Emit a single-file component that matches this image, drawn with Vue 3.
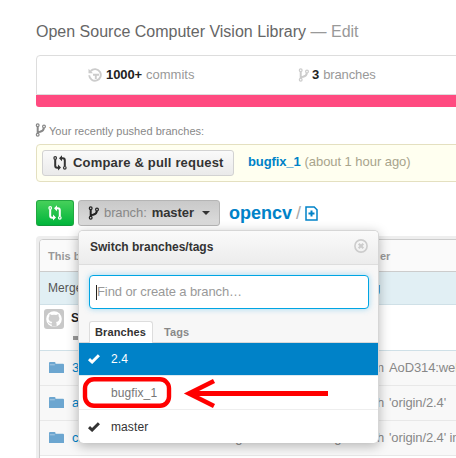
<script setup>
const files = [
  { name: '3rdparty', lead: 'Merge pull request #663 from', rest: 'AoD314:webp' },
  { name: 'android', lead: 'Merge remote-tracking branch', rest: "'origin/2.4'" },
  { name: 'cmake', lead: 'Merge remote-tracking branch', rest: "'origin/2.4' into" },
]
const branches = [
  { name: '2.4', checked: true, active: true },
  { name: 'bugfix_1', muted: true },
  { name: 'master', checked: true },
]
</script>

<template>
  <svg class="defs" width="0" height="0" aria-hidden="true">
    <symbol id="fork" viewBox="0 0 12 14">
      <g fill="none" stroke="currentColor">
        <circle cx="2.7" cy="2.2" r="1.4" stroke-width="1.2" />
        <circle cx="2.7" cy="11.8" r="1.4" stroke-width="1.2" />
        <circle cx="9" cy="3.6" r="1.4" stroke-width="1.2" />
        <path d="M2.7 3.6v6.8M8.8 5c0 3-2.2 3.3-4.2 3.9-1 .3-1.7.8-1.9 1.5" stroke-width="2" />
      </g>
    </symbol>
    <symbol id="compare" viewBox="0 0 14 16">
      <g fill="none" stroke="currentColor">
        <circle cx="2.2" cy="3" r="1.3" stroke-width="1.2" />
        <circle cx="11.8" cy="12.8" r="1.3" stroke-width="1.2" />
        <path d="M2.2 4.5v6.2q0 2 2 2h1.2M11.8 11.3V5.2q0-2-2-2H8.6" stroke-width="2" />
      </g>
      <path d="M5 9.6v6l3-3zM9 .2v6L6 3.2z" fill="currentColor" />
    </symbol>
    <symbol id="check" viewBox="0 0 12 10">
      <path d="M1 5.2 4.1 8 10.9 1.2" fill="none" stroke="currentColor" stroke-width="3" />
    </symbol>
  </svg>

  <main class="page">
    <h1 class="title">Open Source Computer Vision Library <span>— Edit</span></h1>

    <section class="stats">
      <div class="stat commits">
        <svg class="i-history" viewBox="0 0 14 14">
          <path d="M2.7 3A5.8 5.8 0 1 1 1.2 7.2M7.8 11V6.8H5M7.8 6.8H11" fill="none" stroke="currentColor" stroke-width="1.9" />
          <path d="M.5.8v4.4H5z" fill="currentColor" />
        </svg>
        <b>1000+</b><span>commits</span>
      </div>
      <div class="stat branch-count">
        <svg class="i-fork"><use href="#fork" /></svg>
        <b>3</b><span>branches</span>
      </div>
    </section>
    <div class="language"></div>

    <div class="recent"><svg class="i-fork"><use href="#fork" /></svg><span>Your recently pushed branches:</span></div>
    <section class="pushed">
      <button class="compare-btn"><svg class="i-compare"><use href="#compare" /></svg><span>Compare &amp; pull request</span></button>
      <a>bugfix_1</a><span class="when">(about 1 hour ago)</span>
    </section>

    <nav class="toolbar">
      <button class="green"><svg class="i-compare"><use href="#compare" /></svg></button>
      <div class="picker">
        <button class="branch-btn">
          <svg class="i-fork"><use href="#fork" /></svg>
          <span class="label">branch:</span><b>master</b><i class="caret"></i>
        </button>
        <div class="menu">
          <header class="menu-head">
            <b>Switch branches/tags</b>
            <svg class="close" viewBox="0 0 14 14">
              <circle cx="7" cy="7" r="6.1" fill="none" stroke="currentColor" stroke-width="1.6" />
              <path d="m4.7 4.7 4.6 4.6m0-4.6L4.7 9.3" stroke="currentColor" stroke-width="2.1" />
            </svg>
          </header>
          <div class="filters">
            <div class="field"><i class="cursor"></i><span>Find or create a branch…</span></div>
            <div class="tabs"><b class="tab on">Branches</b><b class="tab">Tags</b></div>
          </div>
          <div v-for="b in branches" :key="b.name" class="option" :class="{ active: b.active, muted: b.muted }">
            <span class="tick"><svg v-if="b.checked"><use href="#check" /></svg></span>
            <span class="option-name">{{ b.name }}</span>
          </div>
          <svg class="marks" viewBox="0 0 260 40">
            <rect x="6" y="7.3" width="84" height="26.5" rx="9" stroke-width="4.4" />
            <path d="M249 21.5H110" stroke-width="5" />
            <path d="M135 9 110 21.5 135 34" stroke-width="4.6" />
          </svg>
        </div>
      </div>
      <a class="repo">opencv</a><span class="slash">/</span>
      <svg class="newfile" viewBox="0 0 13 15">
        <path d="M1 1h8.2L12 3.8V14H1z" fill="none" stroke="currentColor" stroke-width="1.5" />
        <path d="M6.5 4.5v6M3.5 7.5h6" stroke="currentColor" stroke-width="2" />
      </svg>
    </nav>

    <section class="table-frame">
      <div class="table">
        <div class="thead"><b class="lead">This branch</b><b>er</b></div>
        <div class="message"><span class="lead">Merge pull request</span><b>g</b></div>
        <div class="author">
          <svg class="avatar" viewBox="0 0 20 20">
            <rect width="20" height="20" rx="3" fill="#c8c8c8" />
            <circle cx="10" cy="10" r="7.8" fill="#fff" />
            <path d="M5.6 5l2.2 1.1q2.2-.5 4.4 0L14.4 5l.3 2.5q1.3 1.7.3 3.8-.8 1.5-3 1.8.6.6.6 1.6v2.7H7.8v-2q-2.3.3-3-1.6l-.9-.8q1.3-.2 1.9 1 .8.7 2 .3 0-.8.5-1.2-3-.3-3.6-2.6-.4-1.8.6-3z" fill="#cdcdcd" />
          </svg>
          <div class="who"><b>SpecLad</b>
            <svg viewBox="0 0 12 10"><path d="M0 3h5V0l6 5-6 5V7H0z" fill="#999" /></svg>
          </div>
        </div>
        <div v-for="f in files" :key="f.name" class="file">
          <svg class="folder" viewBox="0 0 15 12"><path d="M0 1q0-1 1-1h4.5q1 0 1 1v.7H14q1 0 1 1V11H0z" fill="#6ca6d0" /><path d="M.8 2.8h5" stroke="#b8d4e8" stroke-width=".8" /></svg>
          <a>{{ f.name }}</a>
          <span class="commit-lead">{{ f.lead }}</span><span>{{ f.rest }}</span>
        </div>
      </div>
    </section>
  </main>
</template>

<style>
body { margin: 0; background: #fff; overflow: hidden; }
</style>
<style scoped>
* { box-sizing: border-box; }
.defs { position: absolute; }
.page { width: 456px; height: 458px; overflow: hidden; padding-left: 36px; font: 13px/18px "Liberation Sans", Arial, sans-serif; color: #222; white-space: nowrap; }
svg { display: block; flex: none; }
button { font: inherit; margin: 0; padding: 0; color: inherit; }
.title { margin: 0; padding-top: 21px; height: 55px; font-size: 16px; line-height: 21px; font-weight: 400; color: #666; }
.title span { color: #999; }
.i-fork { width: 12px; height: 14px; }
.i-compare { width: 14px; height: 16px; }
.stats { display: flex; width: 440px; height: 40px; border: 1px solid #ddd; border-radius: 4px 4px 0 0; }
.stat { display: flex; align-items: center; color: #999; }
.stat svg { color: #ccc; }
.stat b { color: #222; margin: 0 4px 0 4px; letter-spacing: -.1px; }
.commits { width: 211px; padding-left: 51px; }
.commits svg { width: 14px; height: 14px; }
.branch-count b { margin-left: 2px; }
.branch-count { padding-left: 50px; letter-spacing: -.12px; }
.language { width: 440px; height: 12px; background: #ff4a80; border-radius: 0 0 0 3px; }
.recent { display: flex; align-items: center; height: 37px; padding-top: 11px; gap: 2px; font-size: 11px; color: #888; }
.recent svg { margin-left: -1px; margin-top: -3px; }
.recent span { letter-spacing: .03px; }
.pushed { display: flex; align-items: center; width: 440px; height: 38px; padding-left: 5px; border: 1px solid #e4e0c0; border-radius: 4px; background: #fffff0; }
.compare-btn { display: flex; align-items: center; width: 192px; height: 26px; padding-left: 10px; gap: 6px; border: 1px solid #d2d2d2; border-radius: 3px; background: linear-gradient(#fafafa, #eaeaea); font-weight: 700; color: #333; letter-spacing: .18px; }
.pushed a { margin-left: 14px; font-weight: 700; color: #0082c8; padding-bottom: 3px; letter-spacing: -.12px; }
.when { margin-left: 4px; color: #a8a48c; padding-bottom: 3px; letter-spacing: -.05px; }
.toolbar { display: flex; align-items: center; height: 54px; padding: 18px 0 10px; }
.green { display: grid; place-items: center; width: 38px; height: 26px; border: 1px solid #22a740; border-bottom-color: #10983a; border-radius: 3px; color: #fff; background: linear-gradient(#46d05a, #00b53b); }
.picker { position: relative; margin-left: 4px; }
.branch-btn { display: flex; align-items: center; width: 142px; height: 26px; padding-left: 9px; border: 1px solid #b5b5b5; border-radius: 3px; background: linear-gradient(#c9c9c9, #dcdcdc); }
.label { margin: 0 5px 0 4px; color: #888; letter-spacing: -.1px; }
.branch-btn b { color: #333; letter-spacing: -.05px; }
.caret { margin-left: 8px; border: 4px solid transparent; border-top-color: #333; border-bottom: 0; }
.repo { margin-left: 9px; font-size: 18px; line-height: 20px; font-weight: 700; color: #0082c8; }
.slash { margin: 0 4px 0 4px; font-size: 18px; line-height: 20px; color: #aaa; }
.newfile { width: 13px; height: 15px; color: #0082c8; }
.menu { position: absolute; z-index: 2; left: 0; top: 30px; width: 301px; height: 213px; border: 1px solid #d6d6d6; border-bottom: 0; border-radius: 5px; background: #fff; box-shadow: 0 3px 12px rgba(0,0,0,.28); }
.menu-head { display: flex; align-items: center; justify-content: space-between; height: 34px; padding: 0 10px 2px 11px; border-bottom: 1px solid #ddd; border-radius: 4px 4px 0 0; background: linear-gradient(#fafafa, #ececec); color: #333; font-size: 12px; }
.close { width: 14px; height: 14px; margin-top: -2px; color: #ccc; }
.filters { height: 78px; padding: 10px 9px 0 10px; border-bottom: 1px solid #d8d8d8; background: #f7f7f7; }
.field { display: flex; align-items: center; height: 34px; padding-left: 6px; border: 1px solid #00a5e3; border-radius: 4px; background: #fff; color: #999; letter-spacing: -.1px; box-shadow: 0 0 6px rgba(0,160,230,.35); }
.cursor { width: 1px; height: 15px; background: #222; }
.tabs { display: flex; padding-top: 12px; font-size: 11px; }
.tab { height: 22px; line-height: 22px; padding: 0 11px; color: #888; letter-spacing: .1px; }
.tab.on { width: 64px; line-height: 20px; padding: 0 0 0 5px; border: 1px solid #ddd; border-bottom: 0; border-radius: 3px 3px 0 0; background: #fff; color: #333; }
.option { display: flex; align-items: center; height: 34px; border-bottom: 1px solid #eee; font-size: 12px; color: #333; letter-spacing: .1px; }
.option.active { height: 33px; background: #0082c8; color: #fff; border-color: #dce9f0; }
.option.muted { color: #777; }
.option:last-of-type { border: 0; }
.tick { width: 32px; padding-left: 9px; }
.tick svg { width: 12px; height: 10px; }
.marks { position: absolute; left: 0; top: 141px; width: 260px; height: 40px; fill: none; stroke: #f00; }
.table-frame { width: 460px; height: 240px; padding: 3px; border-radius: 4px 0 0 0; background: #eee; }
.table { height: 240px; border: 1px solid #ccc; border-radius: 4px 0 0 0; background: #fff; overflow: hidden; }
.thead { display: flex; align-items: center; height: 32px; padding-left: 8px; border-bottom: 1px solid #ccc; background: #fafafa; color: #999; font-size: 11px; }
.lead { width: 332px; }
.message { display: flex; align-items: center; height: 33px; padding-left: 8px; border-bottom: 1px solid #cfe0e7; background: #e1eff4; color: #555; font-size: 12px; letter-spacing: .1px; }
.message .lead { width: 325px; }
.message b { color: #2a6590; }
.author { display: flex; height: 46px; padding: 4px 0 0 4px; border-bottom: 1px solid #cfe0e7; }
.avatar { width: 20px; height: 20px; }
.who { margin-left: 7px; font-size: 12px; }
.who svg { width: 12px; height: 10px; margin: 6px 0 0 2px; }
.file { display: flex; align-items: center; height: 35px; padding-left: 9px; border-bottom: 1px solid #e8e8e8; background: #f8f8f8; color: #888; letter-spacing: -.12px; }
.folder { width: 15px; height: 12px; }
.file a { width: 60px; margin-left: 8px; color: #0082c8; }
.commit-lead { width: 252px; margin-right: 5px; text-align: right; }
</style>
